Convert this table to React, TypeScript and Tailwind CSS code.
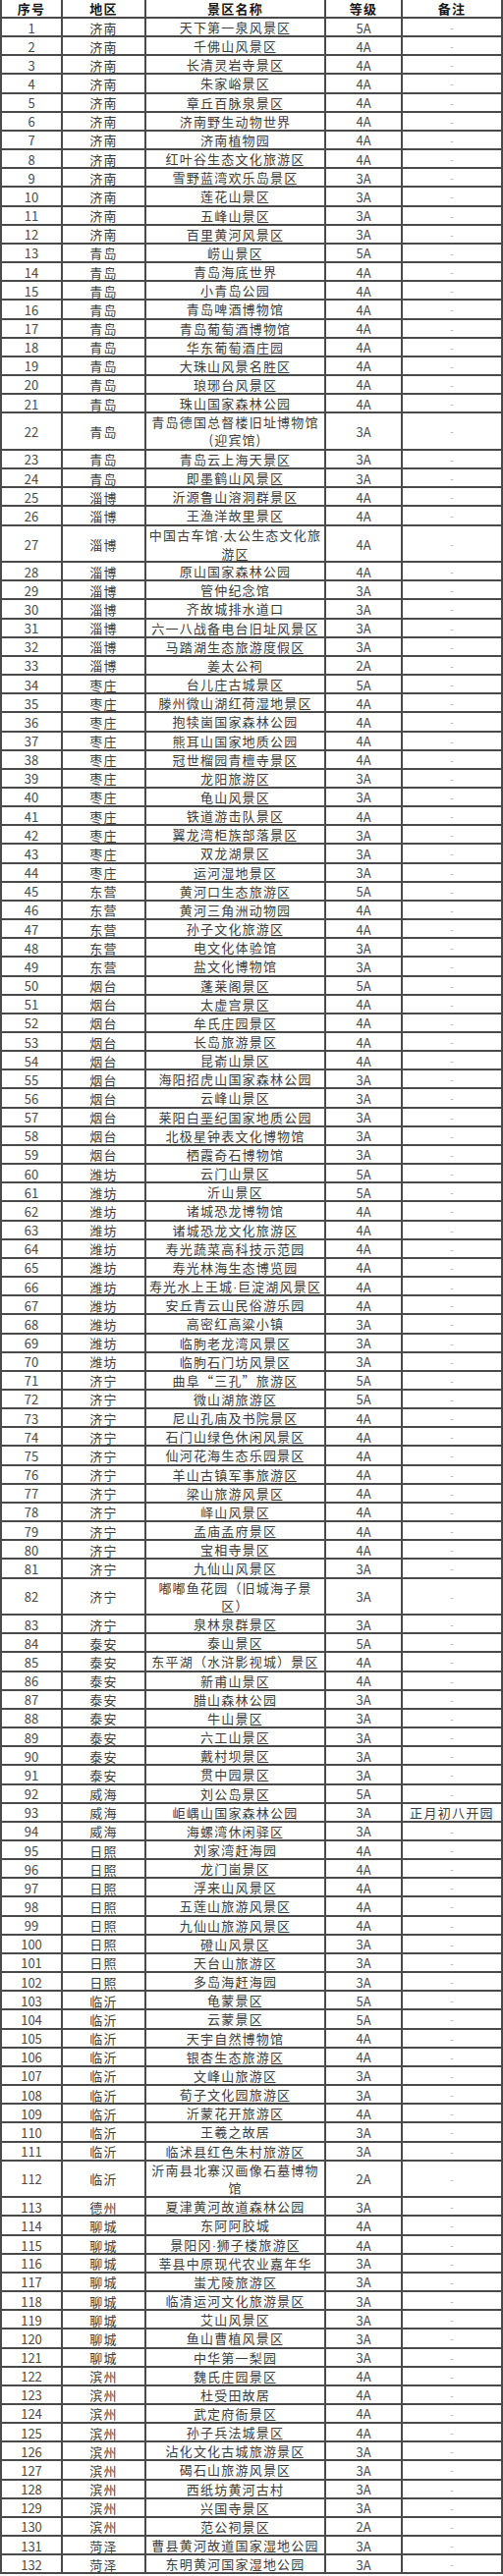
import React from 'react';

type Row = [string, string, string, string?];

// 地区 | 景区名称 | 等级 | 备注
const rows: Row[] = [
  ['济南', '天下第一泉风景区', '5A'],
  ['济南', '千佛山风景区', '4A'],
  ['济南', '长清灵岩寺景区', '4A'],
  ['济南', '朱家峪景区', '4A'],
  ['济南', '章丘百脉泉景区', '4A'],
  ['济南', '济南野生动物世界', '4A'],
  ['济南', '济南植物园', '4A'],
  ['济南', '红叶谷生态文化旅游区', '4A'],
  ['济南', '雪野蓝湾欢乐岛景区', '3A'],
  ['济南', '莲花山景区', '3A'],
  ['济南', '五峰山景区', '3A'],
  ['济南', '百里黄河风景区', '3A'],
  ['青岛', '崂山景区', '5A'],
  ['青岛', '青岛海底世界', '4A'],
  ['青岛', '小青岛公园', '4A'],
  ['青岛', '青岛啤酒博物馆', '4A'],
  ['青岛', '青岛葡萄酒博物馆', '4A'],
  ['青岛', '华东葡萄酒庄园', '4A'],
  ['青岛', '大珠山风景名胜区', '4A'],
  ['青岛', '琅琊台风景区', '4A'],
  ['青岛', '珠山国家森林公园', '4A'],
  ['青岛', '青岛德国总督楼旧址博物馆\n(迎宾馆)', '3A'],
  ['青岛', '青岛云上海天景区', '3A'],
  ['青岛', '即墨鹤山风景区', '3A'],
  ['淄博', '沂源鲁山溶洞群景区', '4A'],
  ['淄博', '王渔洋故里景区', '4A'],
  ['淄博', '中国古车馆·太公生态文化旅\n游区', '4A'],
  ['淄博', '原山国家森林公园', '4A'],
  ['淄博', '管仲纪念馆', '3A'],
  ['淄博', '齐故城排水道口', '3A'],
  ['淄博', '六一八战备电台旧址风景区', '3A'],
  ['淄博', '马踏湖生态旅游度假区', '3A'],
  ['淄博', '姜太公祠', '2A'],
  ['枣庄', '台儿庄古城景区', '5A'],
  ['枣庄', '滕州微山湖红荷湿地景区', '4A'],
  ['枣庄', '抱犊崮国家森林公园', '4A'],
  ['枣庄', '熊耳山国家地质公园', '4A'],
  ['枣庄', '冠世榴园青檀寺景区', '4A'],
  ['枣庄', '龙阳旅游区', '3A'],
  ['枣庄', '龟山风景区', '3A'],
  ['枣庄', '铁道游击队景区', '4A'],
  ['枣庄', '翼龙湾柜族部落景区', '3A'],
  ['枣庄', '双龙湖景区', '3A'],
  ['枣庄', '运河湿地景区', '3A'],
  ['东营', '黄河口生态旅游区', '5A'],
  ['东营', '黄河三角洲动物园', '4A'],
  ['东营', '孙子文化旅游区', '4A'],
  ['东营', '电文化体验馆', '3A'],
  ['东营', '盐文化博物馆', '3A'],
  ['烟台', '蓬莱阁景区', '5A'],
  ['烟台', '太虚宫景区', '4A'],
  ['烟台', '牟氏庄园景区', '4A'],
  ['烟台', '长岛旅游景区', '4A'],
  ['烟台', '昆嵛山景区', '4A'],
  ['烟台', '海阳招虎山国家森林公园', '3A'],
  ['烟台', '云峰山景区', '3A'],
  ['烟台', '莱阳白垩纪国家地质公园', '3A'],
  ['烟台', '北极星钟表文化博物馆', '3A'],
  ['烟台', '栖霞奇石博物馆', '3A'],
  ['潍坊', '云门山景区', '5A'],
  ['潍坊', '沂山景区', '5A'],
  ['潍坊', '诸城恐龙博物馆', '4A'],
  ['潍坊', '诸城恐龙文化旅游区', '4A'],
  ['潍坊', '寿光蔬菜高科技示范园', '4A'],
  ['潍坊', '寿光林海生态博览园', '4A'],
  ['潍坊', '寿光水上王城·巨淀湖风景区', '4A'],
  ['潍坊', '安丘青云山民俗游乐园', '4A'],
  ['潍坊', '高密红高粱小镇', '3A'],
  ['潍坊', '临朐老龙湾风景区', '3A'],
  ['潍坊', '临朐石门坊风景区', '3A'],
  ['济宁', '曲阜“三孔”旅游区', '5A'],
  ['济宁', '微山湖旅游区', '5A'],
  ['济宁', '尼山孔庙及书院景区', '4A'],
  ['济宁', '石门山绿色休闲风景区', '4A'],
  ['济宁', '仙河花海生态乐园景区', '4A'],
  ['济宁', '羊山古镇军事旅游区', '4A'],
  ['济宁', '梁山旅游风景区', '4A'],
  ['济宁', '峄山风景区', '4A'],
  ['济宁', '孟庙孟府景区', '4A'],
  ['济宁', '宝相寺景区', '4A'],
  ['济宁', '九仙山风景区', '3A'],
  ['济宁', '嘟嘟鱼花园（旧城海子景\n区）', '3A'],
  ['济宁', '泉林泉群景区', '3A'],
  ['泰安', '泰山景区', '5A'],
  ['泰安', '东平湖（水浒影视城）景区', '4A'],
  ['泰安', '新甫山景区', '4A'],
  ['泰安', '腊山森林公园', '3A'],
  ['泰安', '牛山景区', '3A'],
  ['泰安', '六工山景区', '3A'],
  ['泰安', '戴村坝景区', '3A'],
  ['泰安', '贯中园景区', '3A'],
  ['威海', '刘公岛景区', '5A'],
  ['威海', '岠嵎山国家森林公园', '3A', '正月初八开园'],
  ['威海', '海螺湾休闲驿区', '3A'],
  ['日照', '刘家湾赶海园', '4A'],
  ['日照', '龙门崮景区', '4A'],
  ['日照', '浮来山风景区', '4A'],
  ['日照', '五莲山旅游风景区', '4A'],
  ['日照', '九仙山旅游风景区', '4A'],
  ['日照', '磴山风景区', '3A'],
  ['日照', '天台山旅游区', '3A'],
  ['日照', '多岛海赶海园', '3A'],
  ['临沂', '龟蒙景区', '5A'],
  ['临沂', '云蒙景区', '5A'],
  ['临沂', '天宇自然博物馆', '4A'],
  ['临沂', '银杏生态旅游区', '4A'],
  ['临沂', '文峰山旅游区', '3A'],
  ['临沂', '荀子文化园旅游区', '3A'],
  ['临沂', '沂蒙花开旅游区', '4A'],
  ['临沂', '王羲之故居', '3A'],
  ['临沂', '临沭县红色朱村旅游区', '3A'],
  ['临沂', '沂南县北寨汉画像石墓博物\n馆', '2A'],
  ['德州', '夏津黄河故道森林公园', '3A'],
  ['聊城', '东阿阿胶城', '4A'],
  ['聊城', '景阳冈·狮子楼旅游区', '4A'],
  ['聊城', '莘县中原现代农业嘉年华', '3A'],
  ['聊城', '蚩尤陵旅游区', '3A'],
  ['聊城', '临清运河文化旅游景区', '3A'],
  ['聊城', '艾山风景区', '3A'],
  ['聊城', '鱼山曹植风景区', '3A'],
  ['聊城', '中华第一梨园', '3A'],
  ['滨州', '魏氏庄园景区', '4A'],
  ['滨州', '杜受田故居', '4A'],
  ['滨州', '武定府衙景区', '4A'],
  ['滨州', '孙子兵法城景区', '4A'],
  ['滨州', '沾化文化古城旅游景区', '3A'],
  ['滨州', '碣石山旅游风景区', '3A'],
  ['滨州', '西纸坊黄河古村', '3A'],
  ['滨州', '兴国寺景区', '3A'],
  ['滨州', '范公祠景区', '2A'],
  ['菏泽', '曹县黄河故道国家湿地公园', '3A'],
  ['菏泽', '东明黄河国家湿地公园', '3A'],
];

const cell = 'flex items-center justify-center border-r-2 border-[#4a4a4a]';

// the CJK font draws "·" full width; the sheet uses a narrow one
const Name: React.FC<{ text: string }> = ({ text }) => (
  <span className="block shrink-0">
    {text.split('·').map((p, j) => (
      <React.Fragment key={j}>
        {j > 0 && <span className="font-['Liberation_Sans',sans-serif] tracking-[0.5px]">·</span>}
        {p}
      </React.Fragment>
    ))}
  </span>
);

export default function App() {
  return (
    <div className="w-[512px] bg-white font-['Noto_Sans_CJK_SC','Noto_Sans',sans-serif] text-[13px] text-[#3c3c3c]">
      <div className="border-x-2 border-[#4a4a4a]">
        <div className="grid h-[19px] grid-cols-[62px_85px_183px_78px_100px] border-b-2 border-[#4a4a4a] font-bold leading-none tracking-[1.3px] text-[#161616]">
          <div className={cell}>序号</div>
          <div className={cell}>地区</div>
          <div className={cell}>景区名称</div>
          <div className={cell}>等级</div>
          <div className="flex items-center justify-center">备注</div>
        </div>
        {rows.map(([area, name, level, note], i) => {
          const tall = name.includes('\n');
          return (
            <div
              key={i}
              className={`grid grid-cols-[62px_85px_183px_78px_100px] border-b-2 border-[#4a4a4a] ${tall ? 'h-[37.6px]' : 'h-[19.16px]'}`}
            >
              <div className={`${cell} leading-none text-[#4a4a4a]`}>{i + 1}</div>
              <div className={`${cell} leading-none tracking-[1.3px]`}>{area}</div>
              <div className={`${cell} whitespace-pre text-center leading-[18px] tracking-[1.2px]`}>
                <Name text={name} />
              </div>
              <div className={`${cell} leading-none text-[#4a4a4a]`}>{level}</div>
              <div className="flex items-center justify-center leading-none">
                {note ? (
                  <span className="tracking-[1.3px]">{note}</span>
                ) : (
                  <span className="text-[10px] text-[#a8a8a8]">-</span>
                )}
              </div>
            </div>
          );
        })}
      </div>
    </div>
  );
}
